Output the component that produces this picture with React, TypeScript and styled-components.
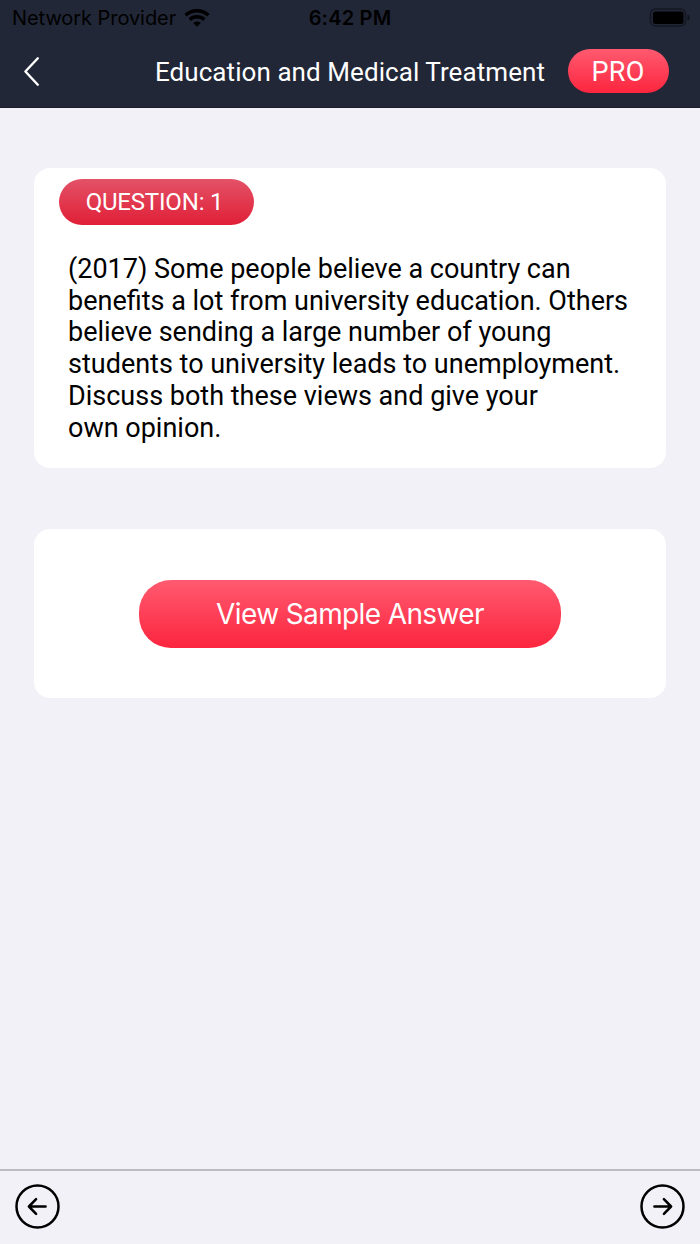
import React from "react";
import styled, { createGlobalStyle } from "styled-components";

const GlobalStyle = createGlobalStyle`
  * { box-sizing: border-box; }
  body { margin: 0; background: #f2f1f7; font-family: Roboto, sans-serif; }
  button { border: 0; padding: 0; background: none; font: inherit; color: inherit; }
`;

const Screen = styled.div`
  display: flex;
  flex-direction: column;
  width: 700px;
  height: 1244px;
  background: #f2f1f7;
`;

const Header = styled.header`
  height: 108px;
  background: #222737;
  border-bottom: 1px solid #1b1d2d;
`;

const StatusBar = styled.div`
  display: grid;
  grid-template-columns: 1fr auto 1fr;
  align-items: center;
  height: 36px;
  padding: 0 9px 0 12px;
  font-family: Inter, sans-serif;
  font-size: 20px;
  line-height: 24px;
  color: #000;
`;

const Carrier = styled.div`
  display: flex;
  align-items: center;
  gap: 8px;
  letter-spacing: -0.06px;
  white-space: nowrap;
`;

const Clock = styled.div`
  margin-right: 3px;
  font-weight: 600;
  letter-spacing: 0.2px;
`;

const Battery = styled.svg`
  justify-self: end;
  display: block;
`;

const NavBar = styled.div`
  display: flex;
  align-items: center;
  height: 71px;
  padding: 0 31px 0 22px;
`;

const BackButton = styled.button`
  width: 22px;
  height: 34px;
  svg { display: block; }
`;

const Title = styled.h1`
  flex: 1;
  margin: 0 23px 0 0;
  text-align: right;
  font-size: 26px;
  font-weight: 400;
  line-height: 32px;
  letter-spacing: 0.07px;
  color: #fff;
  white-space: nowrap;
`;

const Pill = styled.button<{ $w: number; $h: number; $r: number; $muted?: boolean }>`
  display: flex;
  align-items: center;
  justify-content: center;
  width: ${(p) => p.$w}px;
  height: ${(p) => p.$h}px;
  border-radius: ${(p) => p.$r}px;
  color: #fff;
  white-space: nowrap;
  background: ${(p) =>
    p.$muted
      ? "linear-gradient(#e35267, #e01f37)"
      : "linear-gradient(#ff5a70, #fc253e)"};
`;

const ProPill = styled(Pill)`
  margin-top: -1px;
  padding: 2px 1px 0 0;
  font-size: 27px;
  letter-spacing: 0.2px;
`;

const QuestionPill = styled(Pill)`
  margin-left: -9px;
  padding-right: 4px;
  font-size: 24px;
  letter-spacing: -0.18px;
`;

const AnswerPill = styled(Pill)`
  padding-top: 1px;
  font-family: Inter, sans-serif;
  font-size: 28px;
  letter-spacing: -0.62px;
`;

const Main = styled.main`
  flex: 1;
  display: flex;
  flex-direction: column;
  gap: 61px;
  padding: 60px 34px 0;
`;

const Card = styled.section`
  background: #fff;
  border-radius: 16px;
`;

const QuestionCard = styled(Card)`
  height: 300px;
  padding: 11px 34px 0;
`;

const AnswerCard = styled(Card)`
  display: flex;
  align-items: center;
  justify-content: center;
  height: 169px;
`;

const Question = styled.p`
  margin: 29px 0 0;
  font-size: 27px;
  line-height: 31.7px;
  color: #000;
  white-space: nowrap;
`;

const Toolbar = styled.footer`
  display: flex;
  align-items: center;
  justify-content: space-between;
  height: 75px;
  padding: 0 15px 2px;
  border-top: 2px solid #bcbbc1;
`;

const RoundButton = styled.button`
  width: 45px;
  height: 45px;
  svg { display: block; }
`;

const lines = [
  "(2017) Some people believe a country can",
  "benefits a lot from university education. Others",
  "believe sending a large number of young",
  "students to university leads to unemployment.",
  "Discuss both these views and give your",
  "own opinion.",
];

function WifiIcon() {
  return (
    <svg width="26" height="19" viewBox="0 0 26 19" fill="none" stroke="#000">
      <path d="M1.6 6.3C8 .3 18 .3 24.4 6.3" strokeWidth="3.5" />
      <path d="M5.7 10.6C9.8 6.8 16.2 6.8 20.3 10.6" strokeWidth="3.5" />
      <path d="M9.3 14C11.4 12 14.6 12 16.7 14L13 17.8Z" fill="#000" stroke="none" />
    </svg>
  );
}

function ArrowCircle({ right = false }: { right?: boolean }) {
  return (
    <svg width="45" height="45" viewBox="0 0 45 45" fill="none" stroke="#000" strokeLinecap="round" strokeLinejoin="round">
      <circle cx="22.5" cy="22.5" r="21" strokeWidth="2.5" />
      <path
        d={right ? "M14.4 22.5H30.5M23.9 15.2L31.1 22.5L23.9 29.8" : "M30.6 22.5H14.5M21.1 15.2L13.9 22.5L21.1 29.8"}
        strokeWidth="2.5"
      />
    </svg>
  );
}

export default function App() {
  return (
    <Screen>
      <GlobalStyle />
      <Header>
        <StatusBar>
          <Carrier>
            Network Provider
            <WifiIcon />
          </Carrier>
          <Clock>6:42 PM</Clock>
          <Battery width="42" height="20" viewBox="0 0 42 20">
            <rect x="1.5" y="1" width="35" height="17" rx="5" fill="none" stroke="#151823" strokeWidth="1.6" />
            <rect x="4" y="3.5" width="30.5" height="12.5" rx="2.5" />
            <path d="M38.5 6.5C41.4 7.6 41.4 11.6 38.5 12.7Z" fill="#11141d" />
          </Battery>
        </StatusBar>
        <NavBar>
          <BackButton aria-label="Back">
            <svg width="22" height="34" viewBox="0 0 22 34" fill="none" stroke="#fff" strokeWidth="2.4" strokeLinecap="round" strokeLinejoin="round">
              <path d="M15.8 3.3L3.4 16.5L15.8 29.7" />
            </svg>
          </BackButton>
          <Title>Education and Medical Treatment</Title>
          <ProPill $w={101} $h={44} $r={22}>PRO</ProPill>
        </NavBar>
      </Header>
      <Main>
        <QuestionCard>
          <QuestionPill as="div" $w={195} $h={46} $r={23} $muted>QUESTION: 1</QuestionPill>
          <Question>
            {lines.map((line) => (
              <React.Fragment key={line}>
                {line}
                <br />
              </React.Fragment>
            ))}
          </Question>
        </QuestionCard>
        <AnswerCard>
          <AnswerPill $w={422} $h={68} $r={32}>View Sample Answer</AnswerPill>
        </AnswerCard>
      </Main>
      <Toolbar>
        <RoundButton aria-label="Previous">
          <ArrowCircle />
        </RoundButton>
        <RoundButton aria-label="Next">
          <ArrowCircle right />
        </RoundButton>
      </Toolbar>
    </Screen>
  );
}
